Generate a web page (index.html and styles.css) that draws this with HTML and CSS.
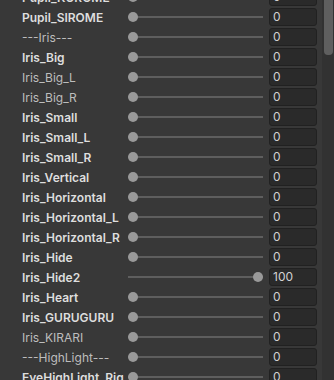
FILE: index.html
```html
<!DOCTYPE html>
<html lang="en">

<head>
    <meta charset="UTF-8">
    <meta name="viewport" content="width=device-width, initial-scale=1.0">
    <title>Blend Shapes</title>
    <link rel="stylesheet" href="styles.css">
</head>

<body>
    <div class="inspector">
        <div class="shape-list">
            <div class="shape-row changed"><div class="label">Pupil_KUROME</div><div class="slider"><span class="knob"></span></div><div class="field">0</div></div>
            <div class="shape-row changed"><div class="label">Pupil_SIROME</div><div class="slider"><span class="knob"></span></div><div class="field">0</div></div>
            <div class="shape-row"><div class="label">---Iris---</div><div class="slider"><span class="knob"></span></div><div class="field">0</div></div>
            <div class="shape-row changed"><div class="label">Iris_Big</div><div class="slider"><span class="knob"></span></div><div class="field">0</div></div>
            <div class="shape-row"><div class="label">Iris_Big_L</div><div class="slider"><span class="knob"></span></div><div class="field">0</div></div>
            <div class="shape-row"><div class="label">Iris_Big_R</div><div class="slider"><span class="knob"></span></div><div class="field">0</div></div>
            <div class="shape-row changed"><div class="label">Iris_Small</div><div class="slider"><span class="knob"></span></div><div class="field">0</div></div>
            <div class="shape-row changed"><div class="label">Iris_Small_L</div><div class="slider"><span class="knob"></span></div><div class="field">0</div></div>
            <div class="shape-row changed"><div class="label">Iris_Small_R</div><div class="slider"><span class="knob"></span></div><div class="field">0</div></div>
            <div class="shape-row changed"><div class="label">Iris_Vertical</div><div class="slider"><span class="knob"></span></div><div class="field">0</div></div>
            <div class="shape-row changed"><div class="label">Iris_Horizontal</div><div class="slider"><span class="knob"></span></div><div class="field">0</div></div>
            <div class="shape-row changed"><div class="label">Iris_Horizontal_L</div><div class="slider"><span class="knob"></span></div><div class="field">0</div></div>
            <div class="shape-row changed"><div class="label">Iris_Horizontal_R</div><div class="slider"><span class="knob"></span></div><div class="field">0</div></div>
            <div class="shape-row changed"><div class="label">Iris_Hide</div><div class="slider"><span class="knob"></span></div><div class="field">0</div></div>
            <div class="shape-row changed"><div class="label">Iris_Hide2</div><div class="slider"><span class="knob" style="--v: 1"></span></div><div class="field">100</div></div>
            <div class="shape-row changed"><div class="label">Iris_Heart</div><div class="slider"><span class="knob"></span></div><div class="field">0</div></div>
            <div class="shape-row changed"><div class="label">Iris_GURUGURU</div><div class="slider"><span class="knob"></span></div><div class="field">0</div></div>
            <div class="shape-row"><div class="label">Iris_KIRARI</div><div class="slider"><span class="knob"></span></div><div class="field">0</div></div>
            <div class="shape-row"><div class="label">---HighLight---</div><div class="slider"><span class="knob"></span></div><div class="field">0</div></div>
            <div class="shape-row changed"><div class="label">EyeHighLight_Rig</div><div class="slider"><span class="knob"></span></div><div class="field">0</div></div>
        </div>

        <div class="scrollbar">
            <div class="scroll-thumb"></div>
        </div>
    </div>
</body>

</html>
```

FILE: styles.css
```css
:root {
    --bg-color: #383838;
    --label-color: #bdbdbd;
    --label-changed-color: #dedede;
    --track-color: #5e5e5e;
    --knob-color: #999999;
    --field-bg: #2a2a2a;
    --field-border: #212121;
    --field-text: #d2d2d2;
    --scroll-track: #323232;
    --scroll-thumb: #5f5f5f;
}

html,
body {
    margin: 0;
    height: 100%;
    background-color: var(--bg-color);
    overflow: hidden;
}

body {
    font-family: Inter, 'Noto Sans', sans-serif;
    font-size: 12px;
}

.inspector {
    display: flex;
    height: 100%;
}

.shape-list {
    display: flex;
    flex-direction: column;
    margin-top: -13px;
    padding-left: 22px;
}

.shape-row {
    display: flex;
    align-items: center;
    height: 20px;
    flex-shrink: 0;
}

.label {
    width: 106px;
    flex-shrink: 0;
    white-space: nowrap;
    overflow: hidden;
    color: var(--label-color);
}

.changed .label {
    color: var(--label-changed-color);
    font-weight: 600;
}

.slider {
    position: relative;
    width: 135px;
    height: 2px;
    flex-shrink: 0;
    background-color: var(--track-color);
}

.knob {
    --v: 0;
    position: absolute;
    top: -4px;
    left: calc(var(--v) * 125px);
    width: 10px;
    height: 10px;
    border-radius: 50%;
    background-color: var(--knob-color);
}

.field {
    width: 48px;
    height: 18px;
    margin-left: 6px;
    box-sizing: border-box;
    padding-left: 3px;
    line-height: 16px;
    flex-shrink: 0;
    background-color: var(--field-bg);
    border: 1px solid var(--field-border);
    border-radius: 3px;
    color: var(--field-text);
}

.scrollbar {
    width: 12px;
    margin-left: 5px;
    flex-shrink: 0;
    background-color: var(--scroll-track);
}

.scroll-thumb {
    width: 9px;
    height: 55px;
    margin-left: 2px;
    border-radius: 0 0 4px 4px;
    background-color: var(--scroll-thumb);
}
```
